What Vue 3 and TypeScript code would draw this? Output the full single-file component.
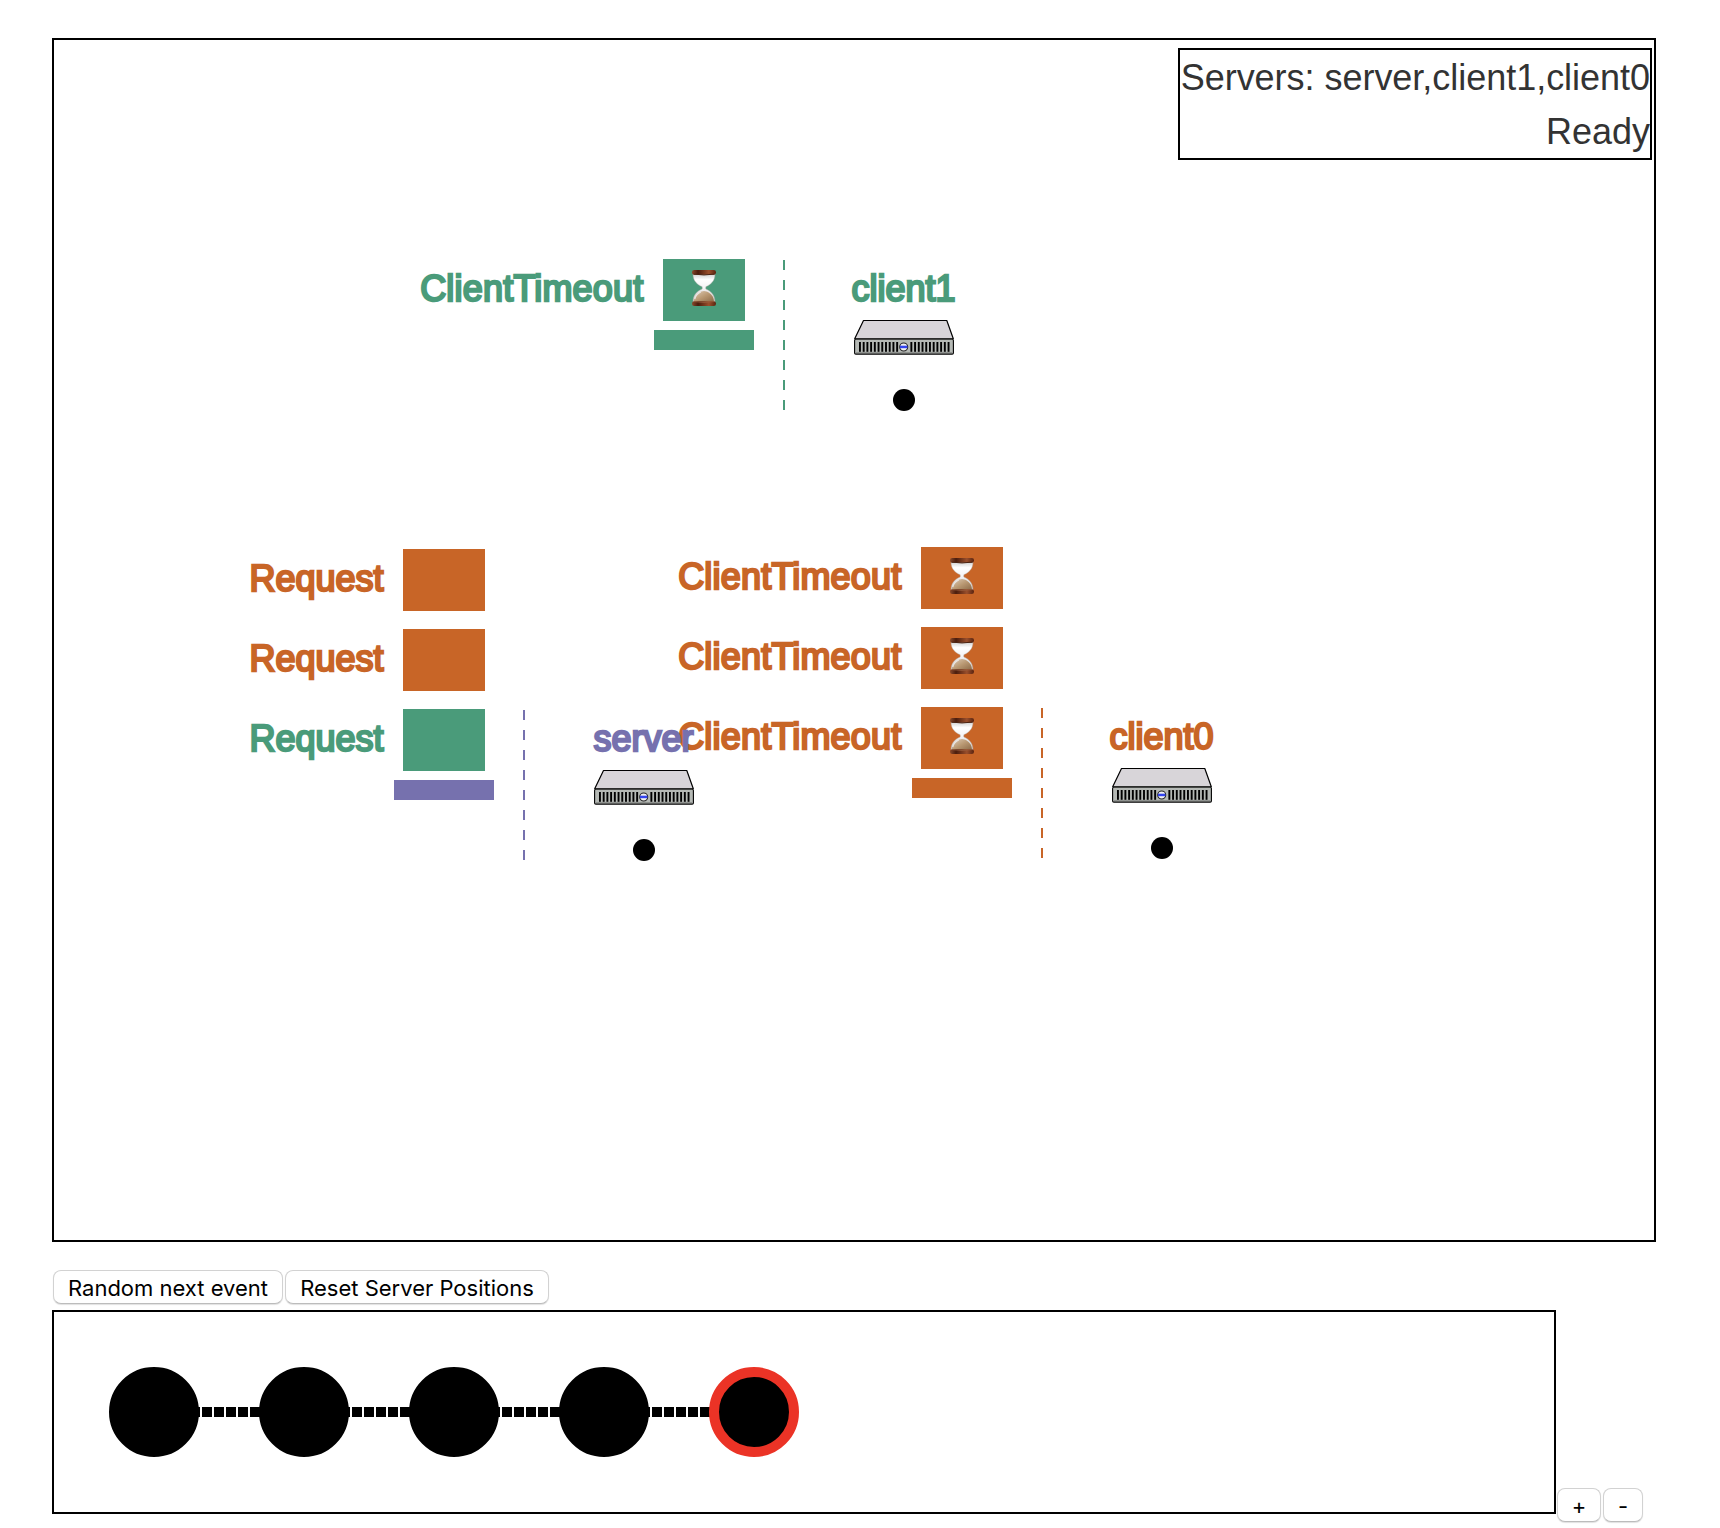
<script setup lang="ts">
interface Message {
  label: string
  color: string
  timeout: boolean
}

interface ServerNode {
  name: string
  x: number
  y: number
  color: string
  inbox: Message[]
}

const green = '#4a9b7a'
const orange = '#c86527'
const purple = '#7671ae'

const timeout = (color: string): Message => ({ label: 'ClientTimeout', color, timeout: true })
const request = (color: string): Message => ({ label: 'Request', color, timeout: false })

const servers: ServerNode[] = [
  { name: 'client0', x: 1108, y: 808, color: orange, inbox: [timeout(orange), timeout(orange), timeout(orange)] },
  { name: 'client1', x: 850, y: 360, color: green, inbox: [timeout(green)] },
  { name: 'server', x: 590, y: 810, color: purple, inbox: [request(green), request(orange), request(orange)] },
]

const vents = [...Array(11).keys()].flatMap((i) => [-45 + i * 3.72, 6.4 + i * 3.72])

const events = [0, 1, 2, 3, 4]
const current = 4
const eventX = (i: number) => 100 + i * 150
</script>

<template>
  <main class="app">
    <section class="stage">
      <svg class="canvas" width="1600" height="1200" viewBox="0 0 1600 1200">
        <defs>
          <linearGradient id="wood" x1="0" x2="1" y1="0" y2="0">
            <stop offset="0" stop-color="#8a4a2c" />
            <stop offset="0.25" stop-color="#4a1c0c" />
            <stop offset="0.7" stop-color="#9a4f2c" />
            <stop offset="1" stop-color="#5a2410" />
          </linearGradient>
          <linearGradient id="glass" x1="0" x2="0" y1="0" y2="1">
            <stop offset="0" stop-color="#cfcfcf" />
            <stop offset="0.2" stop-color="#ffffff" />
            <stop offset="0.5" stop-color="#f4f4f6" />
            <stop offset="1" stop-color="#c9c3c0" />
          </linearGradient>
          <linearGradient id="sand" x1="0" x2="1" y1="0" y2="1">
            <stop offset="0" stop-color="#dccab4" />
            <stop offset="0.5" stop-color="#b99872" />
            <stop offset="1" stop-color="#8b6a48" />
          </linearGradient>
          <g id="hourglass">
            <path d="M-11 -14C-11 -6.500 -6.500 -3.500 -1.800 -1.200V1C-6.500 3 -11 6.500 -11 14H11C11 6.500 6.500 3 1.800 1V-1.200C6.500 -3.500 11 -6.500 11 -14Z" fill="url(#glass)" stroke="#b3a8a2" stroke-width="0.4" />
            <path d="M-10 14C-10 8.500 -6.500 5 -2.500 3.600Q0 2.600 2.500 3.600C6.500 5 10 8.500 10 14Z" fill="url(#sand)" />
            <path d="M-9.300 11C-8.500 7.500 -6 5.200 -3.200 4" fill="none" stroke="#e9e4e2" stroke-width="1.300" />
            <rect x="-12" y="-18" width="24" height="4.800" rx="2.200" fill="url(#wood)" />
            <path d="M-10.500 -13.900Q0 -12.200 10.500 -13.900" fill="none" stroke="#4b2413" stroke-width="1" />
            <rect x="-12" y="13.200" width="24" height="4.800" rx="2.200" fill="url(#wood)" />
            <path d="M-10 13.600Q0 15.200 10 13.600" fill="none" stroke="#9a6040" stroke-width="0.8" />
          </g>
          <g id="rack">
            <path d="M-49.300 -61.300L-40.500 -79.500H42.800L49.300 -61.300Z" fill="#d8d5d9" stroke="#000" stroke-width="1.200" stroke-linejoin="round" />
            <rect x="-49.400" y="-60.700" width="98.800" height="14.800" rx="1.200" fill="#b5b9b5" stroke="#000" stroke-width="1.100" />
            <path d="M-48.500 -61H48.500M-48 -47H48" stroke="#626562" stroke-width="0.9" />
            <rect v-for="v in vents" :key="v" :x="v" y="-58" width="1.900" height="9.800" />
            <circle cx="-0.300" cy="-53" r="4" fill="#f2f2f2" stroke="#222" stroke-width="1.100" />
            <path d="M-4 -54.300H3.400V-51.800H-4Z" fill="#3344ee" />
          </g>
        </defs>

        <g v-for="s in servers" :key="s.name" :transform="`translate(${s.x} ${s.y})`">
          <line x1="-120" y1="-140" x2="-120" y2="10" :stroke="s.color" stroke-width="2" stroke-dasharray="10 10" />
          <rect x="-250" y="-70" width="100" height="20" :fill="s.color" />
          <g v-for="(m, i) in s.inbox" :key="i" :transform="`translate(0 ${-80 * i})`">
            <rect x="-241" y="-141" width="82" height="62" :fill="m.color" />
            <text
              class="label"
              :class="{ wide: m.timeout }"
              x="-260.500"
              y="-99.500"
              text-anchor="end"
              :fill="m.color"
              :stroke="m.color"
            >{{ m.label }}</text>
            <use v-if="m.timeout" href="#hourglass" x="-200" y="-112" />
          </g>
          <use href="#rack" />
          <text class="label" x="-0.500" y="-99.500" text-anchor="middle" :fill="s.color" :stroke="s.color">{{ s.name }}</text>
          <circle r="11" />
        </g>
      </svg>
      <div class="status">
        <div>Servers: server,client1,client0</div>
        <div>Ready</div>
      </div>
    </section>

    <div class="controls">
      <button class="random">Random next event</button>
      <button class="reset">Reset Server Positions</button>
    </div>

    <div class="history">
      <svg class="timeline" width="1500" height="200" viewBox="0 0 1500 200">
        <line
          v-for="i in events.slice(1)"
          :key="i"
          :x1="eventX(i - 1)"
          y1="100"
          :x2="eventX(i)"
          y2="100"
          stroke="#000"
          stroke-width="10"
          stroke-dasharray="10 2"
        />
        <circle
          v-for="i in events"
          :key="i"
          :cx="eventX(i)"
          cy="100"
          r="40"
          :stroke="i === current ? '#eb3326' : '#000'"
          stroke-width="10"
        />
      </svg>
      <div class="zoom">
        <button class="plus">+</button>
        <button class="minus">-</button>
      </div>
    </div>
  </main>
</template>

<style>
body {
  background: #fff;
}
</style>

<style scoped>
.app {
  box-sizing: border-box;
  width: 1720px;
  height: 1528px;
  padding: 38px 0 0 52px;
  overflow: hidden;
  font-family: "Liberation Sans", Arial, sans-serif;
}

.stage {
  position: relative;
  width: 1600px;
  height: 1200px;
  border: 2px solid #000;
}

.canvas,
.timeline {
  display: block;
}

.label {
  font-size: 36px;
  stroke-width: 2.3px;
}

.wide {
  letter-spacing: 0.2px;
}

.status {
  box-sizing: border-box;
  position: absolute;
  top: 8px;
  right: 2px;
  width: 474px;
  height: 112px;
  padding-top: 1px;
  border: 2px solid #000;
  color: #333;
  font-size: 36px;
  line-height: 54px;
  letter-spacing: -0.03px;
  text-align: right;
  white-space: nowrap;
}

.controls {
  display: flex;
  gap: 2px;
  padding: 28px 0 0 1px;
  height: 40px;
}

button {
  box-sizing: border-box;
  height: 34px;
  padding: 2px 0 0;
  border: 1px solid #d2d2d2;
  border-bottom-color: #bcbcbc;
  border-radius: 8px;
  background: #fff;
  box-shadow: 0 1px 1px rgba(0, 0, 0, 0.12);
  color: #000;
  font-family: Inter, sans-serif;
  font-size: 22px;
  line-height: 30px;
  white-space: nowrap;
}

.random {
  width: 230px;
}

.reset {
  width: 264px;
}

.history {
  display: flex;
  align-items: flex-end;
}

.timeline {
  border: 2px solid #000;
}

.zoom {
  display: flex;
  gap: 2px;
  margin: 0 0 -8px 1px;
}

.plus {
  width: 44px;
}

.minus {
  width: 40px;
}
</style>
